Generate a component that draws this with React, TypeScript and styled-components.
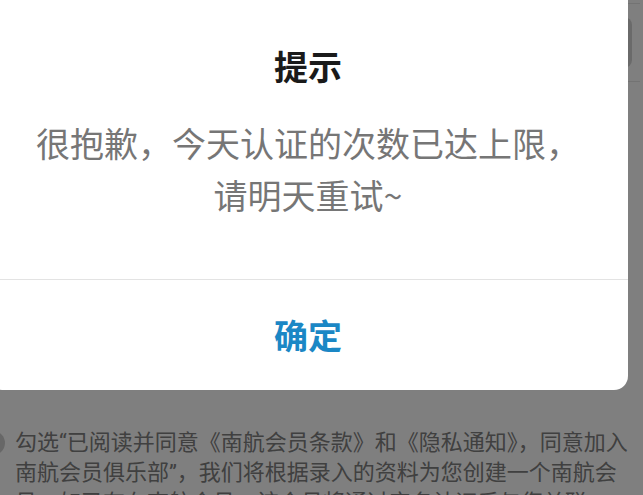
import React from 'react'
import styled, { createGlobalStyle } from 'styled-components'

const GlobalStyle = createGlobalStyle`
  html, body {
    margin: 0;
    padding: 0;
    background: #fff;
    overflow: hidden;
  }
  * {
    box-sizing: border-box;
  }
`

const Page = styled.div`
  position: relative;
  width: 643px;
  height: 495px;
  overflow: hidden;
  background: #fff;
  font-family: "Noto Sans CJK SC", "Noto Sans", sans-serif;
  display: flex;
  flex-direction: column;
  padding-top: 3px;
`

const FieldRow = styled.div`
  flex: none;
  height: 79px;
  margin-right: 3px;
  border-top: 1px solid #e6e6e6;
  border-bottom: 1px solid #e6e6e6;
  display: flex;
  justify-content: flex-end;
  align-items: center;
  padding-right: 8px;
`

const CodeButton = styled.div`
  width: 140px;
  height: 51px;
  border-radius: 8px;
  background: #d4d4d4;
`

const Agreement = styled.div`
  flex: none;
  margin-top: 346px;
  display: flex;
  align-items: flex-start;
  gap: 10px;
`

const RadioDot = styled.div`
  flex: none;
  width: 24px;
  height: 24px;
  margin-left: -19px;
  margin-top: 3px;
  border-radius: 50%;
  background: #cfcfcf;
`

const AgreementText = styled.p`
  margin: 0;
  font-family: Roboto, "Noto Sans CJK SC", sans-serif;
  font-size: 22px;
  line-height: 30px;
  white-space: nowrap;
  color: #808080;
`

const Overlay = styled.div`
  position: absolute;
  inset: 0;
  background: rgba(0, 0, 0, 0.5);
`

const Dialog = styled.div`
  position: absolute;
  left: -12px;
  top: -20px;
  width: 640px;
  background: #fff;
  border-radius: 14px;
  display: flex;
  flex-direction: column;
  overflow: hidden;
`

const DialogBody = styled.div`
  padding: 62px 20px 58px;
  display: flex;
  flex-direction: column;
  align-items: center;
  text-align: center;
`

const Title = styled.h2`
  margin: 0 0 27px;
  font-size: 34px;
  line-height: 48px;
  font-weight: 700;
  color: #1a1a1a;
`

const Message = styled.p`
  margin: 0;
  font-size: 34px;
  line-height: 52px;
  color: #767676;
`

const Footer = styled.div`
  border-top: 1px solid #e3e3e3;
  height: 111px;
  display: flex;
  align-items: center;
  justify-content: center;
`

const ConfirmButton = styled.button`
  border: none;
  background: none;
  padding: 0;
  font-family: inherit;
  font-size: 34px;
  line-height: 48px;
  font-weight: 700;
  color: #1b87c5;
  cursor: pointer;
`

export default function App() {
  return (
    <>
      <GlobalStyle />
      <Page>
        <FieldRow>
          <CodeButton />
        </FieldRow>
        <Agreement>
          <RadioDot />
          <AgreementText>
            勾选“已阅读并同意《南航会员条款》和《隐私通知》，同意加入
            <br />
            南航会员俱乐部”，我们将根据录入的资料为您创建一个南航会
            <br />
            员，如已存在南航会员，该会员将通过实名认证后与您关联。
          </AgreementText>
        </Agreement>
        <Overlay />
        <Dialog>
          <DialogBody>
            <Title>提示</Title>
            <Message>
              很抱歉，今天认证的次数已达上限，
              <br />
              请明天重试~
            </Message>
          </DialogBody>
          <Footer>
            <ConfirmButton>确定</ConfirmButton>
          </Footer>
        </Dialog>
      </Page>
    </>
  )
}
